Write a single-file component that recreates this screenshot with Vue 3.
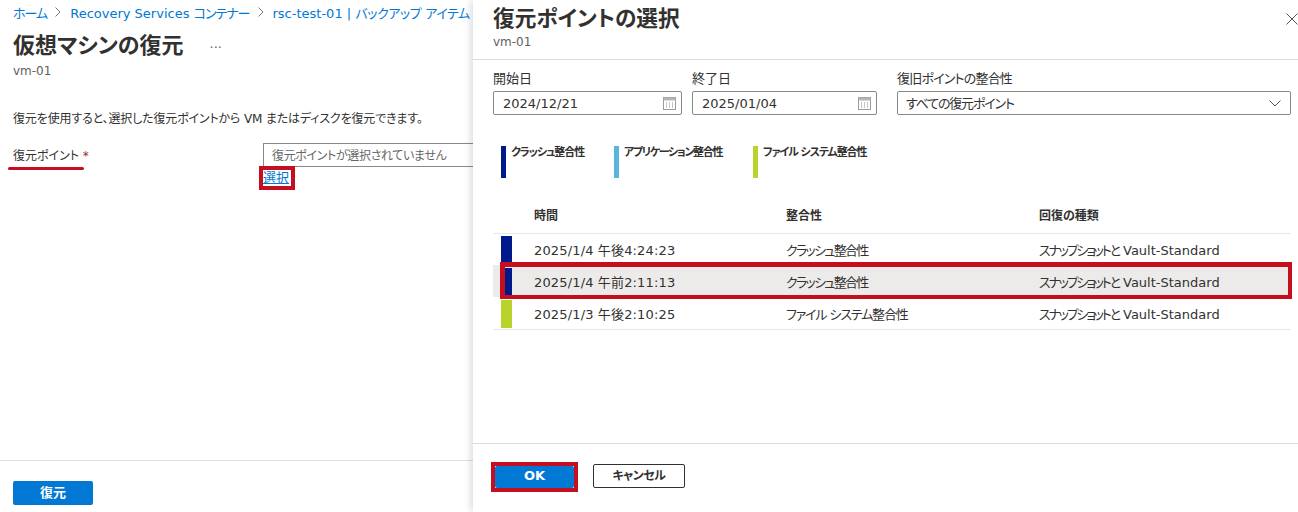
<script setup>
const ranges = [
  { label: '開始日', value: '2024/12/21', cls: 'start' },
  { label: '終了日', value: '2025/01/04', cls: 'end' },
]
const legend = [
  { label: 'クラッシュ整合性', color: '#001a8c', cls: 'l1' },
  { label: 'アプリケーション整合性', color: '#5bb4de', cls: 'l2' },
  { label: 'ファイル システム整合性', color: '#bad22c', cls: 'l3' },
]
const rows = [
  { time: '2025/1/4 午後4:24:23', kind: 'クラッシュ整合性', kindCls: 'k-crash', color: '#001a8c' },
  { time: '2025/1/4 午前2:11:13', kind: 'クラッシュ整合性', kindCls: 'k-crash', color: '#001a8c', selected: true },
  { time: '2025/1/3 午後2:10:25', kind: 'ファイル システム整合性', kindCls: 'k-file', color: '#bad22c' },
]
</script>

<template>
  <div class="page">
    <section class="blade">
      <nav class="crumbs">
        <a class="ja">ホーム</a>
        <svg class="sep" width="6" height="10" viewBox="0 0 6 10"><path d="M.5.5L5 5 .5 9.5" stroke="#777" fill="none"/></svg>
        <a>Recovery Services <span class="ja">コンテナー</span></a>
        <svg class="sep" width="6" height="10" viewBox="0 0 6 10"><path d="M.5.5L5 5 .5 9.5" stroke="#777" fill="none"/></svg>
        <a>rsc-test-01 | <span class="ja-wide">バックアップ アイテム</span></a>
      </nav>
      <div class="title-row">
        <h1>仮想マシンの復元</h1>
        <span class="more">···</span>
      </div>
      <div class="sub">vm-01</div>
      <p class="desc">復元を使用すると、選択した復元ポイントから VM またはディスクを復元できます。</p>
      <div class="field">
        <label class="field-label">復元ポイント <b>*</b><i class="underline"></i></label>
        <div class="field-main">
          <div class="fake-input">復元ポイントが選択されていません</div>
          <a class="pick">選択<i class="mark"></i></a>
        </div>
      </div>
      <footer class="blade-foot">
        <button class="primary restore">復元</button>
      </footer>
    </section>

    <aside class="panel">
      <header class="panel-head">
        <div>
          <h2>復元ポイントの選択</h2>
          <div class="sub">vm-01</div>
        </div>
        <svg class="close" width="12" height="12" viewBox="0 0 12 12"><path d="M.5.5l11 11M11.5.5l-11 11" stroke="#555" fill="none"/></svg>
      </header>
      <div class="panel-body">
        <div class="filters">
          <div v-for="r in ranges" :key="r.label" class="filter" :class="r.cls">
            <label>{{ r.label }}</label>
            <div class="box">
              <span>{{ r.value }}</span>
              <svg width="13" height="13" viewBox="0 0 13 13">
                <rect x=".5" y=".5" width="12" height="12" fill="#fff" stroke="#9a9a9a"/>
                <rect x=".5" y=".5" width="12" height="3" fill="#b5b5b5"/>
                <path d="M3 6h1M6 6h1M9 6h1M3 8h1M6 8h1M9 8h1M3 10h1M6 10h1M9 10h1" stroke="#8a8a8a"/>
              </svg>
            </div>
          </div>
          <div class="filter grow">
            <label>復旧ポイントの整合性</label>
            <div class="box">
              <span>すべての復元ポイント</span>
              <svg width="12" height="7" viewBox="0 0 12 7"><path d="M.5.5L6 6l5.5-5.5" stroke="#555" fill="none"/></svg>
            </div>
          </div>
        </div>
        <div class="legend">
          <div v-for="l in legend" :key="l.label" class="legend-item" :class="l.cls">
            <i :style="{ background: l.color }"></i><span>{{ l.label }}</span>
          </div>
        </div>
        <div class="table">
          <div class="tr th">
            <span class="c1">時間</span><span class="c2">整合性</span><span class="c3">回復の種類</span>
          </div>
          <div v-for="r in rows" :key="r.time" class="tr td" :class="{ selected: r.selected }">
            <i class="swatch" :style="{ background: r.color }"></i>
            <span class="c1 time">{{ r.time }}</span>
            <span class="c2" :class="r.kindCls">{{ r.kind }}</span>
            <span class="c3"><span class="snap">スナップショットと</span> Vault-Standard</span>
            <i v-if="r.selected" class="row-mark"></i>
          </div>
        </div>
      </div>
      <footer class="panel-foot">
        <div class="ok-mark"><button class="primary ok">OK</button></div>
        <button class="cancel">キャンセル</button>
      </footer>
    </aside>
  </div>
</template>

<style>
html, body { margin: 0; background: #fff; }
</style>

<style scoped>
.page {
  display: flex;
  width: 1298px;
  height: 512px;
  overflow: hidden;
  font-family: "DejaVu Sans", "Noto Sans CJK JP", sans-serif;
  font-feature-settings: "palt";
  font-size: 12px;
  color: #323130;
  background: #fff;
}
i { display: block; }
h1, h2, p { margin: 0; }
.blade {
  width: 473px;
  flex: none;
  display: flex;
  flex-direction: column;
  overflow: hidden;
}
.crumbs {
  display: flex;
  align-items: center;
  height: 16px;
  padding: 4px 0 0 13px;
  white-space: nowrap;
  font-size: 13px;
  color: #0078d4;
}
.ja { letter-spacing: -1px; }
.ja-wide { letter-spacing: -0.4px; }
.sep { flex: none; margin: 0 9px 0 8px; }
.title-row { display: flex; align-items: center; margin: 11px 0 0 13px; height: 30px; }
h1 { font-size: 22px; line-height: 30px; font-weight: 700; color: #323130; }
.more { margin: 2px 0 0 26px; color: #666; font-size: 13px; }
.sub { font-size: 12px; line-height: 16px; color: #605e5c; }
.blade > .sub { margin: 2px 0 0 13px; }
.desc { margin: 31px 0 0 13px; line-height: 18px; font-size: 12px; white-space: nowrap; letter-spacing: -0.15px; }
.field { display: flex; margin-top: 15px; }
.field-label { position: relative; width: 250px; margin-left: 13px; font-size: 12px; line-height: 26px; height: 24px; flex: none; }
.field-label b { color: #a4262c; font-weight: 400; }
.underline { position: absolute; left: -5px; top: 24px; width: 76px; height: 3px; border-radius: 2px; background: #c50f1f; }
.field-main { flex: none; width: 240px; }
.fake-input {
  box-sizing: border-box;
  height: 24px;
  border: 1px solid #8a8886;
  border-right: 0;
  padding-left: 8px;
  line-height: 24px;
  color: #666;
  white-space: nowrap;
  letter-spacing: -0.35px;
}
.pick { position: relative; display: block; width: 28px; margin-top: 1px; line-height: 20px; color: #0078d4; font-size: 13px; text-decoration: underline; }
.mark { position: absolute; left: -4px; top: -2px; width: 28px; height: 16px; box-sizing: content-box; border: 4px solid #c50f1f; }
.blade-foot { margin-top: auto; height: 52px; border-top: 1px solid #e0e0e0; padding: 20px 0 0 13px; box-sizing: border-box; }
button { font-family: inherit; font-feature-settings: inherit; padding: 0 0 3px; cursor: pointer; }
.primary { border: 0; background: #0078d4; color: #fff; font-weight: 700; font-size: 13px; border-radius: 2px; }
.restore { width: 80px; height: 24px; }

.panel {
  flex: 1;
  min-width: 0;
  display: flex;
  flex-direction: column;
  position: relative;
  background: #fff;
  box-shadow: -3px 0 6px rgba(0, 0, 0, .12);
}
.panel-head {
  display: flex;
  justify-content: space-between;
  height: 60px;
  box-sizing: border-box;
  padding: 4px 0 0 20px;
  border-bottom: 1px solid #dcdcdc;
}
h2 { font-size: 21.7px; line-height: 30px; font-weight: 700; color: #323130; }
.panel-head .sub { margin-top: 0; }
.close { margin-top: 9px; }
.panel-body { flex: 1; padding: 0 7px 0 20px; min-height: 0; }
.filters { display: flex; margin-top: 9px; }
.filter label { display: block; line-height: 20px; font-size: 13px; }
.start { width: 189px; margin-right: 10px; }
.end { width: 185px; margin-right: 20px; }
.grow { flex: 1; }
.grow label { letter-spacing: -0.8px; }
.box {
  display: flex;
  align-items: center;
  justify-content: space-between;
  height: 24px;
  box-sizing: border-box;
  margin-top: 2px;
  padding: 0 5px 0 9px;
  border: 1px solid #8a8886;
  border-radius: 2px;
  font-size: 13px;
}
.grow .box { padding: 0 9px 2px 8px; letter-spacing: -1.2px; }
.grow .box svg { margin-top: 2px; }
.legend { display: flex; margin: 31px 0 0 8px; height: 32px; }
.legend-item { display: flex; font-size: 11px; font-weight: 700; line-height: 13px; letter-spacing: -1.1px; }
.l2 { letter-spacing: -1.35px; }
.legend-item i { width: 5px; height: 32px; margin-right: 5px; flex: none; }
.l1 { width: 113px; }
.l2 { width: 139px; }
.tr { position: relative; display: flex; align-items: center; }
.th { height: 55px; padding-top: 17px; box-sizing: border-box; font-weight: 700; font-size: 12px; border-bottom: 1px solid #e8e8e8; margin-top: 1px; }
.td { height: 32px; box-sizing: border-box; font-size: 13px; }
.th + .td { margin-top: -1px; }
.td:last-child { border-bottom: 1px solid #e8e8e8; height: 33px; }
.swatch { position: absolute; left: 8px; top: 3px; bottom: 0; width: 11px; }
.td:last-child .swatch { bottom: 1px; }
.c1 { width: 252px; margin-left: 41px; flex: none; }
.c2 { width: 253px; flex: none; }
.time { letter-spacing: 0.15px; }
.k-crash { letter-spacing: -1.7px; }
.k-file { letter-spacing: -1.15px; }
.snap { letter-spacing: -2.2px; }
.selected { background: #edebe9; }
.row-mark { position: absolute; left: 7px; right: -1px; top: -3px; bottom: -2px; border-style: solid; border-color: #c50f1f; border-width: 5px 4px 4px 5px; }
.panel-foot {
  display: flex;
  align-items: flex-start;
  height: 69px;
  box-sizing: border-box;
  flex: none;
  border-top: 1px solid #dcdcdc;
  padding: 18px 0 0 18px;
}
.ok-mark { border: 4px solid #c50f1f; display: flex; }
.ok { width: 79px; height: 22px; }
.cancel {
  margin: 2px 0 0 15px;
  width: 92px;
  height: 24px;
  background: #fff;
  border: 1px solid #323130;
  border-radius: 2px;
  font-size: 12px;
  font-weight: 700;
  color: #323130;
  letter-spacing: -0.5px;
}
</style>
